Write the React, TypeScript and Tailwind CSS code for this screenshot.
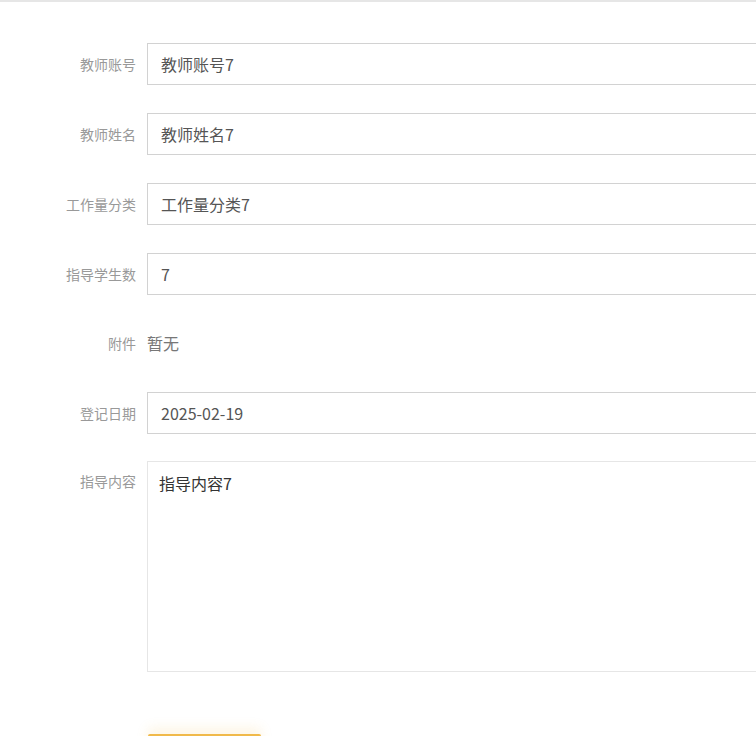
import React from 'react';

const font = { fontFamily: '"Microsoft YaHei", "Noto Sans CJK SC", "Liberation Sans", sans-serif' };

type Row = { label: string; value: string };

const rows: Row[] = [
  { label: '教师账号', value: '教师账号7' },
  { label: '教师姓名', value: '教师姓名7' },
  { label: '工作量分类', value: '工作量分类7' },
  { label: '指导学生数', value: '7' },
];

const Label: React.FC<{ text: string; top?: boolean }> = ({ text, top }) => (
  <div
    className={`w-[147px] shrink-0 pr-[11px] text-right text-[14px] text-[#999] ${top ? 'pt-[10px]' : ''}`}
  >
    {text}
  </div>
);

const Field: React.FC<Row> = ({ label, value }) => (
  <div className="flex h-[42px] items-center">
    <Label text={label} />
    <input
      readOnly
      value={value}
      className="h-[42px] w-[760px] shrink-0 border border-[#d2d2d2] bg-white pl-[13px] text-[16px] text-[#555] outline-none"
      style={font}
    />
  </div>
);

export default function App() {
  return (
    <div className="h-[736px] w-[756px] overflow-hidden border-t-2 border-[#e6e6e6] bg-white" style={font}>
      <div className="flex flex-col pt-[41px]">
        <div className="flex flex-col gap-[28px]">
          {rows.map((r) => (
            <Field key={r.label} {...r} />
          ))}
        </div>
        <div className="mt-[27px] flex h-[42px] items-center">
          <Label text="附件" />
          <span className="text-[16px] text-[#777]">暂无</span>
        </div>
        <div className="mt-[28px]">
          <Field label="登记日期" value="2025-02-19" />
        </div>
        <div className="mt-[27px] flex">
          <Label text="指导内容" top />
          <textarea
            readOnly
            value="指导内容7"
            className="h-[211px] w-[760px] shrink-0 resize-none border border-[#e6e6e6] bg-white px-[11px] pt-[9px] text-[16px] text-[#333] outline-none"
            style={font}
          />
        </div>
        <div className="flex pt-[62px]">
          <div className="w-[148px] shrink-0" />
          <button className="h-[40px] w-[113px] rounded-[2px] bg-[#f0b94a] text-[14px] text-white shadow-[0_-6px_12px_rgba(240,185,74,0.15)]">
            提交
          </button>
        </div>
      </div>
    </div>
  );
}
